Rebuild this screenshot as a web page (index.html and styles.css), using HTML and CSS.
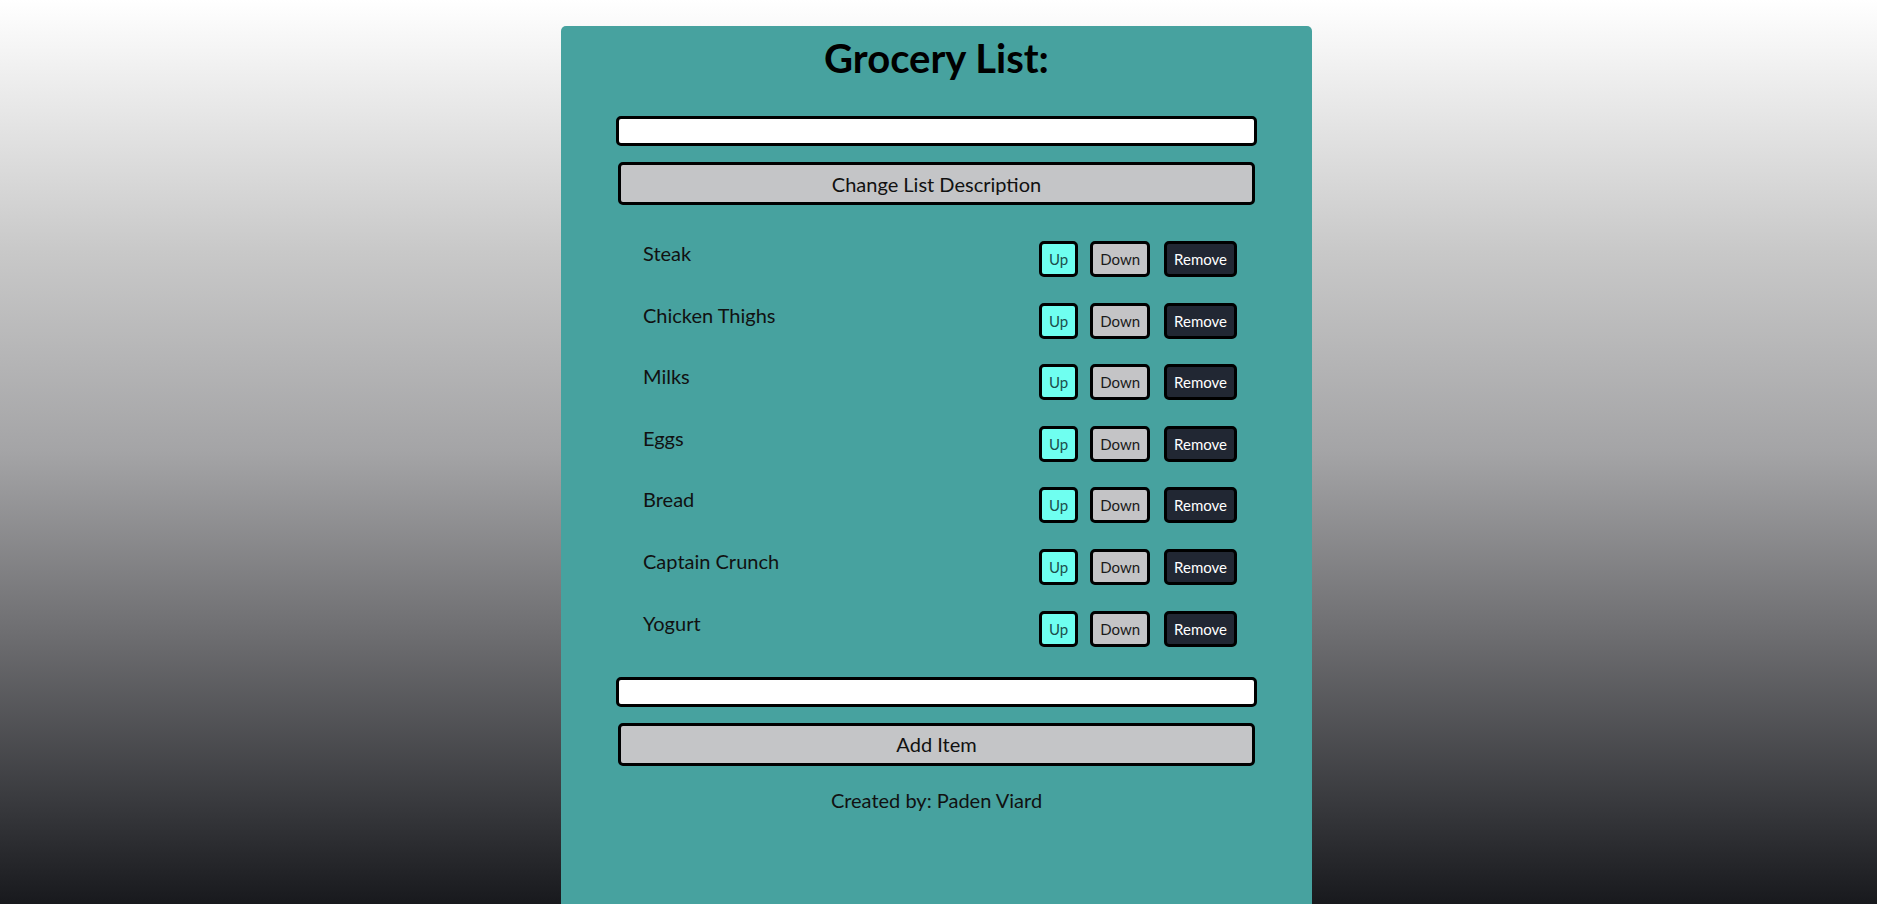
FILE: index.html
```html
<!DOCTYPE html>
<html lang="en">
<head>
<meta charset="utf-8">
<title>Grocery List</title>
<link rel="stylesheet" href="styles.css">
</head>
<body>
<main class="card">
  <h1 class="title">Grocery List:</h1>
  <input class="field field-top" type="text">
  <button class="wide-btn">Change List Description</button>
  <ul class="items">
    <li class="item"><span class="item-name">Steak</span><span class="controls"><button class="btn btn-up">Up</button><button class="btn btn-down">Down</button><button class="btn btn-remove">Remove</button></span></li>
    <li class="item"><span class="item-name">Chicken Thighs</span><span class="controls"><button class="btn btn-up">Up</button><button class="btn btn-down">Down</button><button class="btn btn-remove">Remove</button></span></li>
    <li class="item"><span class="item-name">Milks</span><span class="controls"><button class="btn btn-up">Up</button><button class="btn btn-down">Down</button><button class="btn btn-remove">Remove</button></span></li>
    <li class="item"><span class="item-name">Eggs</span><span class="controls"><button class="btn btn-up">Up</button><button class="btn btn-down">Down</button><button class="btn btn-remove">Remove</button></span></li>
    <li class="item"><span class="item-name">Bread</span><span class="controls"><button class="btn btn-up">Up</button><button class="btn btn-down">Down</button><button class="btn btn-remove">Remove</button></span></li>
    <li class="item"><span class="item-name">Captain Crunch</span><span class="controls"><button class="btn btn-up">Up</button><button class="btn btn-down">Down</button><button class="btn btn-remove">Remove</button></span></li>
    <li class="item"><span class="item-name">Yogurt</span><span class="controls"><button class="btn btn-up">Up</button><button class="btn btn-down">Down</button><button class="btn btn-remove">Remove</button></span></li>
  </ul>
  <input class="field field-bottom" type="text">
  <button class="wide-btn">Add Item</button>
  <p class="credit">Created by: Paden Viard</p>
</main>
</body>
</html>
```
FILE: styles.css
```css
html, body {
  margin: 0;
  padding: 0;
}
body {
  min-height: 100vh;
  overflow: hidden;
  font-family: Lato, "Open Sans", sans-serif;
  background: linear-gradient(to bottom, #ffffff 0%, #c8c8c8 28%, #a4a4a6 50%, #6e6e71 70%, #38393d 89%, #18191d 100%);
}
.card {
  box-sizing: border-box;
  width: 751px;
  min-height: calc(100vh - 26px);
  margin: 26px 0 0 calc(50% - 377.5px);
  padding-top: 8px;
  background: #47a29f;
  border-radius: 5px 5px 0 0;
  display: flex;
  flex-direction: column;
  align-items: center;
  color: #111;
}
.title {
  margin: 0;
  font-size: 40px;
  font-weight: 700;
  line-height: 48px;
  color: #000;
}
.field {
  box-sizing: border-box;
  width: 641px;
  height: 30px;
  border: 3px solid #000;
  border-radius: 5px;
  background: #fff;
  padding: 0 6px;
  font-family: Lato, sans-serif;
  font-size: 16px;
}
.field-top {
  margin-top: 34px;
}
.field-bottom {
  margin-top: 30px;
}
.wide-btn {
  box-sizing: border-box;
  width: 637px;
  height: 43px;
  margin-top: 16px;
  border: 3px solid #000;
  border-radius: 5px;
  background: #c4c5c7;
  color: #111;
  font-family: Lato, sans-serif;
  font-size: 20px;
  padding: 0;
}
.items {
  list-style: none;
  align-self: stretch;
  margin: 36px 0 0;
  padding: 0 75px 0 82px;
  display: flex;
  flex-direction: column;
  gap: 25.6px;
}
.item {
  display: flex;
  justify-content: space-between;
  align-items: flex-start;
}
.item-name {
  font-size: 20px;
  line-height: 24px;
  color: #111;
}
.controls {
  display: flex;
}
.btn {
  box-sizing: border-box;
  height: 36px;
  padding: 0 7px;
  border: 3px solid #000;
  border-radius: 5px;
  font-family: Lato, sans-serif;
  font-size: 15px;
  line-height: 18px;
}
.btn-up {
  background: #6ffff0;
  color: #1c4f4c;
}
.btn-down {
  margin-left: 12px;
  background: #c4c4c6;
  color: #1a1a1a;
}
.btn-remove {
  margin-left: 14px;
  background: #212733;
  color: #fff;
}
.credit {
  margin: 22px 0 0;
  font-size: 20px;
  line-height: 24px;
  color: #111;
}
```
